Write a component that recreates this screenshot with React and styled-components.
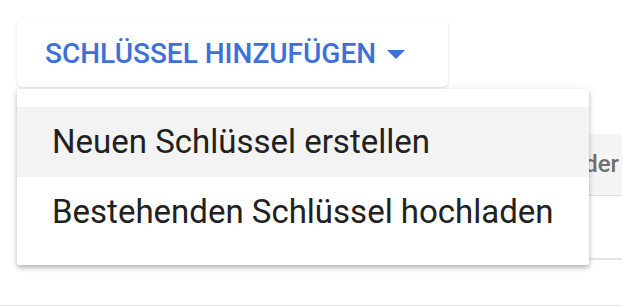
import styled, { createGlobalStyle } from 'styled-components';

const GlobalStyle = createGlobalStyle`
  html, body {
    margin: 0;
    padding: 0;
    background: #ffffff;
  }
  body {
    font-family: Roboto, "Liberation Sans", sans-serif;
    overflow: hidden;
  }
`;

const Page = styled.div`
  position: relative;
  width: 622px;
  height: 306px;
  overflow: hidden;
  padding: 19px 0 0 17px;
  box-sizing: border-box;
`;

const AddButton = styled.button`
  display: inline-flex;
  align-items: center;
  gap: 11px;
  height: 68px;
  width: 431px;
  padding: 0 0 0 28px;
  border: none;
  border-radius: 5px;
  background: #ffffff;
  box-shadow: 0 1px 3px rgba(0, 0, 0, 0.12), 0 0 1px rgba(0, 0, 0, 0.06);
  color: #3d70d9;
  font-family: Roboto, "Liberation Sans", sans-serif;
  font-size: 28px;
  font-weight: 500;
  text-transform: uppercase;
  white-space: nowrap;
  cursor: pointer;
`;

const Caret = styled.span`
  width: 0;
  height: 0;
  margin-top: 2px;
  border-left: 9.5px solid transparent;
  border-right: 9.5px solid transparent;
  border-top: 9px solid #3d70d9;
`;

const Table = styled.div`
  margin-top: 47px;
  width: 640px;
`;

const HeaderRow = styled.div`
  display: grid;
  grid-template-columns: 602px 1fr;
  height: 61px;
  background: #f5f5f5;
  border-bottom: 1px solid #dedede;
`;

const HeaderCell = styled.div`
  line-height: 61px;
  font-size: 24px;
  font-weight: 500;
  color: #717171;
  white-space: nowrap;
  text-align: right;
`;

const BodyRow = styled.div`
  height: 62px;
  border-bottom: 2px solid #e4e4e4;
`;

const Divider = styled.div`
  margin-top: 45px;
  margin-left: -17px;
  height: 2px;
  width: 622px;
  background: #e2ecdf;
`;

const Menu = styled.ul`
  position: absolute;
  top: 89px;
  left: 17px;
  width: 572px;
  margin: 0;
  padding: 18px 0;
  list-style: none;
  background: #ffffff;
  border-radius: 2px;
  box-shadow: 0 3px 4px rgba(0, 0, 0, 0.22), 0 1px 8px rgba(0, 0, 0, 0.1);
`;

const MenuItem = styled.li`
  height: 70px;
  line-height: 70px;
  padding-left: 35px;
  font-size: 33px;
  color: #212121;
  white-space: nowrap;
  background: ${({ $active }) => ($active ? '#f3f3f3' : 'transparent')};
`;

const items = [
  { label: 'Neuen Schlüssel erstellen', active: true },
  { label: 'Bestehenden Schlüssel hochladen', active: false }
];

const App = () => {
  return (
    <Page>
      <GlobalStyle />
      <AddButton>
        Schlüssel hinzufügen
        <Caret />
      </AddButton>
      <Table>
        <HeaderRow>
          <HeaderCell>oder</HeaderCell>
        </HeaderRow>
        <BodyRow />
      </Table>
      <Divider />
      <Menu>
        {items.map(item => (
          <MenuItem key={item.label} $active={item.active}>
            {item.label}
          </MenuItem>
        ))}
      </Menu>
    </Page>
  );
};

export default App;
